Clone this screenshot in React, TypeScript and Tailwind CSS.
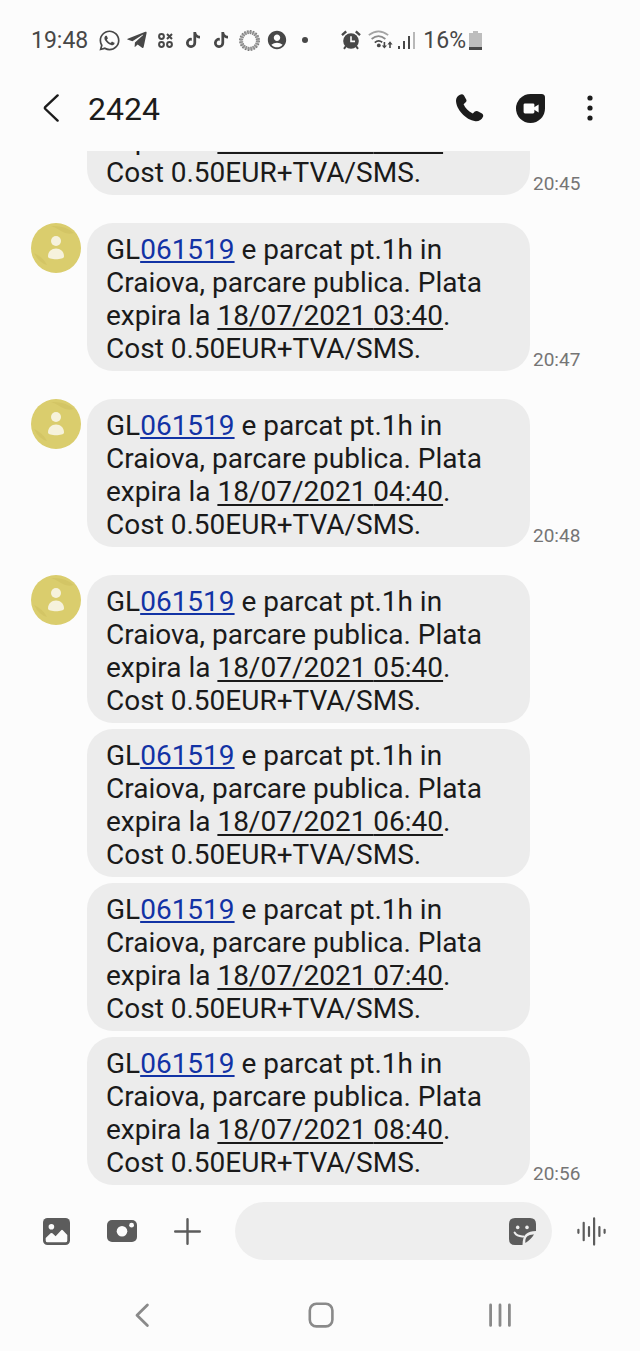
import { FaTelegramPlane, FaTiktok, FaWhatsapp } from 'react-icons/fa'
import { MdAccountCircle } from 'react-icons/md'

interface Message {
  id: number
  expires: string
}

interface MessageGroup {
  time: string
  messages: Message[]
}

const groups: MessageGroup[] = [
  { time: '20:45', messages: [{ id: 1, expires: '02:40' }] },
  { time: '20:47', messages: [{ id: 2, expires: '03:40' }] },
  { time: '20:48', messages: [{ id: 3, expires: '04:40' }] },
  {
    time: '20:56',
    messages: [
      { id: 4, expires: '05:40' },
      { id: 5, expires: '06:40' },
      { id: 6, expires: '07:40' },
      { id: 7, expires: '08:40' },
    ],
  },
]

function StatusBar() {
  return (
    <div className="flex h-20 shrink-0 items-center pl-[31px] text-[23px] leading-none text-[#474747]">
      <span>19:48</span>
      <div className="ml-[7px] grid grid-cols-8 items-center justify-items-center *:w-7">
        <span className="flex justify-center">
          <FaWhatsapp size={23} />
        </span>
        <span className="flex justify-center">
          <FaTelegramPlane size={22} />
        </span>
        <span className="flex justify-center">
          <svg width="15" height="15" viewBox="0 0 15 15" fill="none" stroke="currentColor" strokeWidth="2">
            <circle cx="3.5" cy="3.5" r="2.4" />
            <circle cx="3.5" cy="11.5" r="2.4" />
            <circle cx="11.5" cy="11.5" r="2.4" />
            <path d="M9 1l5 5M14 1L9 6" />
          </svg>
        </span>
        <span className="flex justify-center">
          <FaTiktok size={16} />
        </span>
        <span className="flex justify-center">
          <FaTiktok size={16} />
        </span>
        <span className="flex justify-center">
          <svg width="21" height="21" viewBox="0 0 21 21" fill="none" stroke="#777777">
            <circle cx="10.5" cy="10.5" r="8.4" strokeWidth="4" strokeDasharray="1.6 1.04" />
            <circle cx="10.5" cy="10.5" r="8.4" strokeWidth="2.4" stroke="#a0a0a0" strokeOpacity="0.7" />
          </svg>
        </span>
        <span className="flex justify-center">
          <MdAccountCircle size={22} />
        </span>
        <span className="flex justify-center">
          <svg width="6" height="6" viewBox="0 0 6 6">
            <circle cx="3" cy="3" r="3" fill="currentColor" />
          </svg>
        </span>
      </div>

      <svg className="ml-[22px]" width="20" height="20" viewBox="0 0 20 20" fill="none" stroke="currentColor">
        <circle cx="10" cy="11" r="7.8" fill="currentColor" stroke="none" />
        <path d="M1 5.2L5.2 1.4M19 5.2L14.8 1.4" strokeWidth="2.4" />
        <path d="M5 16l-2 2.8M15 16l2 2.8" strokeWidth="2" />
        <path d="M10 6.2v5.2h4" stroke="#fcfcfc" strokeWidth="1.6" />
      </svg>
      <svg className="ml-[7px]" width="25" height="20" viewBox="0 0 25 20" fill="none" stroke="currentColor">
        <path d="M.8 5.2Q10.5-2.6 20.2 5.2" stroke="#a4a4a4" strokeWidth="1.7" />
        <path d="M3.6 9Q10.5 3.2 17.4 9" stroke="#8c8c8c" strokeWidth="1.7" />
        <path d="M6.8 12.6Q10.5 9.4 14.2 12.2" strokeWidth="1.8" />
        <circle cx="10.8" cy="15.4" r="1.9" fill="currentColor" stroke="none" />
        <path d="M16.4 12v5M22 18v-5" strokeWidth="1.6" />
        <path d="M13.8 15.4h5.2l-2.6 3.2zM19.4 14.4h5.2L22 11.2z" fill="currentColor" stroke="none" />
      </svg>
      <svg className="ml-[5px]" width="17" height="18" viewBox="0 0 17 18" fill="none" stroke="currentColor" strokeWidth="2">
        <path d="M1 18v-3M6 18v-8M11 18V5" />
        <path d="M16 18V1" stroke="#b8b8b8" />
      </svg>
      <span className="ml-2">16%</span>
      <svg className="ml-[3px]" width="13" height="19" viewBox="0 0 13 19">
        <path d="M4 0h5v2h4v17H0V2h4z" fill="#bdbdbd" />
        <path d="M0 16h13v3H0z" fill="currentColor" />
      </svg>
    </div>
  )
}

function Header() {
  return (
    <header className="mb-[15px] flex h-14 shrink-0 items-center pr-[47px] pl-[43px] text-[#1c1c1c]">
      <button aria-label="Back" className="w-[45px]">
        <svg width="16" height="28" viewBox="0 0 16 28" fill="none" stroke="currentColor" strokeWidth="2.4" strokeLinecap="round" strokeLinejoin="round">
          <path d="M14.6 1.4L2.4 12.8q-1 1.2 0 2.2L14.6 26.6" />
        </svg>
      </button>
      <h1 className="flex-1 pt-0.5 text-[32px] leading-none">2424</h1>
      <button aria-label="Call">
        <svg width="28" height="28" viewBox="0 0 28 28">
          <path
            d="M4 .7Q6.6-.5 8 1.6L10.2 5.4Q11 7 9.7 8.3L7.6 10.2C9 13.8 12.6 17.4 16.8 19.6L18.8 17.6Q20.2 16.4 21.8 17.2L26 19.6Q27.8 20.8 27 22.8C25.6 26 23 27.4 19.5 27.2C9.5 26 0 15 0 6.5C0 3.8 1.6 1.6 4 .7z"
            fill="currentColor"
          />
        </svg>
      </button>
      <button aria-label="Video call" className="ml-8">
        <svg width="29" height="29" viewBox="0 0 29 29">
          <path d="M14.5 0H25.5Q29 0 29 3.5V14.5A14.5 14.5 0 1 1 14.5 0z" fill="currentColor" />
          <rect x="7.6" y="9.4" width="10.8" height="10" rx="1.4" fill="#ffffff" />
          <path d="M17.8 13.6L22.6 10.4V18.6L17.8 15.4z" fill="#ffffff" />
        </svg>
      </button>
      <button aria-label="More options" className="ml-[42px]">
        <svg width="6" height="26" viewBox="0 0 6 26" fill="currentColor">
          <circle cx="3" cy="3" r="2.6" />
          <circle cx="3" cy="13" r="2.6" />
          <circle cx="3" cy="23" r="2.6" />
        </svg>
      </button>
    </header>
  )
}

function Avatar() {
  return (
    <svg className="shrink-0" width="50" height="50" viewBox="0 0 50 50">
      <circle cx="25" cy="25" r="25" fill="#dacd6d" />
      <path d="M20 3Q34 2 43 10Q36 12 30 8Q24 4 20 3z" fill="#d3c565" />
      <path d="M3 30Q12 34 16 42Q8 40 3 30z" fill="#d3c565" />
      <circle cx="25" cy="18" r="5" fill="#f6f2dc" />
      <path d="M17 33.5C17 28.5 20.5 25.5 25 25.5S33 28.5 33 33.5C33 35.5 29 36.2 25 36.2S17 35.5 17 33.5z" fill="#f6f2dc" />
    </svg>
  )
}

function Bubble({ expires }: { expires: string }) {
  return (
    <p className="rounded-[26px] bg-[#ececec] pt-2.5 pr-8 pb-1.5 pl-[19px] text-[28px] leading-[33px] text-[#1a1a1a]">
      GL
      <a href="tel:061519" className="text-[#1233a5] underline decoration-2 underline-offset-2 [text-decoration-skip-ink:none]">
        061519
      </a>{' '}
      e parcat pt.1h in Craiova, parcare publica. Plata expira la{' '}
      <a href="#calendar" className="whitespace-nowrap underline underline-offset-3 [text-decoration-skip-ink:none]">
        18/07/2021 {expires}
      </a>
      . Cost 0.50EUR+TVA/SMS.
    </p>
  )
}

function Conversation() {
  return (
    <main className="flex min-h-0 flex-1 flex-col justify-end gap-7 overflow-hidden">
      {groups.map((group) => (
        <section key={group.time} className="flex shrink-0 items-start pl-[31px]">
          <Avatar />
          <div className="ml-1.5 flex flex-1 flex-col gap-1.5">
            {group.messages.map((message) => (
              <Bubble key={message.id} expires={message.expires} />
            ))}
          </div>
          <time className="ml-[3px] w-[107px] self-end text-[19px] leading-[23px] text-[#757575]">{group.time}</time>
        </section>
      ))}
    </main>
  )
}

function Composer() {
  return (
    <form className="mt-[17px] flex shrink-0 items-center pr-[34px] pl-[43px] text-[#5c5c5c]">
      <button type="button" aria-label="Gallery">
        <svg width="27" height="27" viewBox="0 0 27 27">
          <rect width="27" height="27" rx="4.5" fill="currentColor" />
          <circle cx="8.4" cy="8.8" r="2.8" fill="#fcfcfc" />
          <path d="M2.7 20L7.6 15.3Q8.5 14.5 9.4 15.3L12.6 18.2L18.2 12.2Q19 11.4 19.8 12.2L24.3 17V22.4Q24.3 24.3 22.4 24.3H4.6Q2.7 24.3 2.7 22.4z" fill="#fcfcfc" />
        </svg>
      </button>
      <button type="button" aria-label="Camera" className="ml-[37px]">
        <svg width="30" height="22" viewBox="0 0 30 22">
          <rect width="30" height="22" rx="5" fill="currentColor" />
          <circle cx="15" cy="11.2" r="5.3" fill="#fcfcfc" />
          <circle cx="24.6" cy="5.2" r="2.4" fill="#fcfcfc" />
        </svg>
      </button>
      <button type="button" aria-label="Add" className="ml-[37px]">
        <svg width="27" height="27" viewBox="0 0 27 27" fill="none" stroke="currentColor" strokeWidth="2.4" strokeLinecap="round">
          <path d="M13.5 1.2v24.6M1.2 13.5h24.6" />
        </svg>
      </button>
      <div className="ml-[34px] flex h-[58px] flex-1 items-center rounded-full bg-[#eeeeee] pr-4 pl-6">
        <input type="text" aria-label="Message" className="w-full min-w-0 flex-1 bg-transparent text-[28px] text-[#1a1a1a] outline-none" />
        <button type="button" aria-label="Stickers" className="shrink-0">
          <svg width="27" height="27" viewBox="0 0 27 27">
            <path d="M6 0H21Q27 0 27 6V13Q20.5 13 17 16Q13.5 19 13.5 27H6Q0 27 0 21V6Q0 0 6 0z" fill="currentColor" />
            <path d="M25 16.6Q23.6 19 21.4 21Q19 23.4 16.4 25Q15.8 20.4 18.4 18.2Q20.6 16.4 25 16.6z" fill="currentColor" />
            <circle cx="8.7" cy="9.4" r="1.8" fill="#eeeeee" />
            <circle cx="18" cy="9.4" r="1.8" fill="#eeeeee" />
            <path d="M5.6 14.6Q8 18.8 14.4 18.4" fill="none" stroke="#eeeeee" strokeWidth="2" strokeLinecap="round" />
          </svg>
        </button>
      </div>
      <button type="button" aria-label="Voice message" className="ml-[25px]">
        <svg width="29" height="29" viewBox="0 0 29 29" fill="none" stroke="currentColor" strokeWidth="2.2" strokeLinecap="round">
          <path d="M1.4 12.8v3M6.7 5.8v17.4M12 10v9M17.1 1.4v26.2M22.4 10v9M27.6 12.8v3" />
        </svg>
      </button>
    </form>
  )
}

function NavigationBar() {
  return (
    <nav className="flex shrink-0 items-center justify-between pt-10 pr-[125px] pb-[21px] pl-[127px] text-[#8a8a8a]">
      <button aria-label="Navigate back">
        <svg width="30" height="30" viewBox="0 0 30 30" fill="none" stroke="currentColor" strokeWidth="2.8" strokeLinecap="round" strokeLinejoin="round">
          <path d="M20.4 5L10 15.2L20.4 25.4" />
        </svg>
      </button>
      <button aria-label="Home">
        <svg width="30" height="30" viewBox="0 0 30 30" fill="none" stroke="currentColor" strokeWidth="2.6">
          <rect x="3.8" y="3.8" width="22.6" height="22.6" rx="6.6" />
        </svg>
      </button>
      <button aria-label="Recent apps">
        <svg width="30" height="30" viewBox="0 0 30 30" fill="none" stroke="currentColor" strokeWidth="2.8" strokeLinecap="round">
          <path d="M5.6 5v20.4M15 5v20.4M24.4 5v20.4" />
        </svg>
      </button>
    </nav>
  )
}

export default function App() {
  return (
    <div className="flex h-screen flex-col bg-[#fcfcfc] font-[Roboto,sans-serif]">
      <StatusBar />
      <Header />
      <Conversation />
      <Composer />
      <NavigationBar />
    </div>
  )
}
